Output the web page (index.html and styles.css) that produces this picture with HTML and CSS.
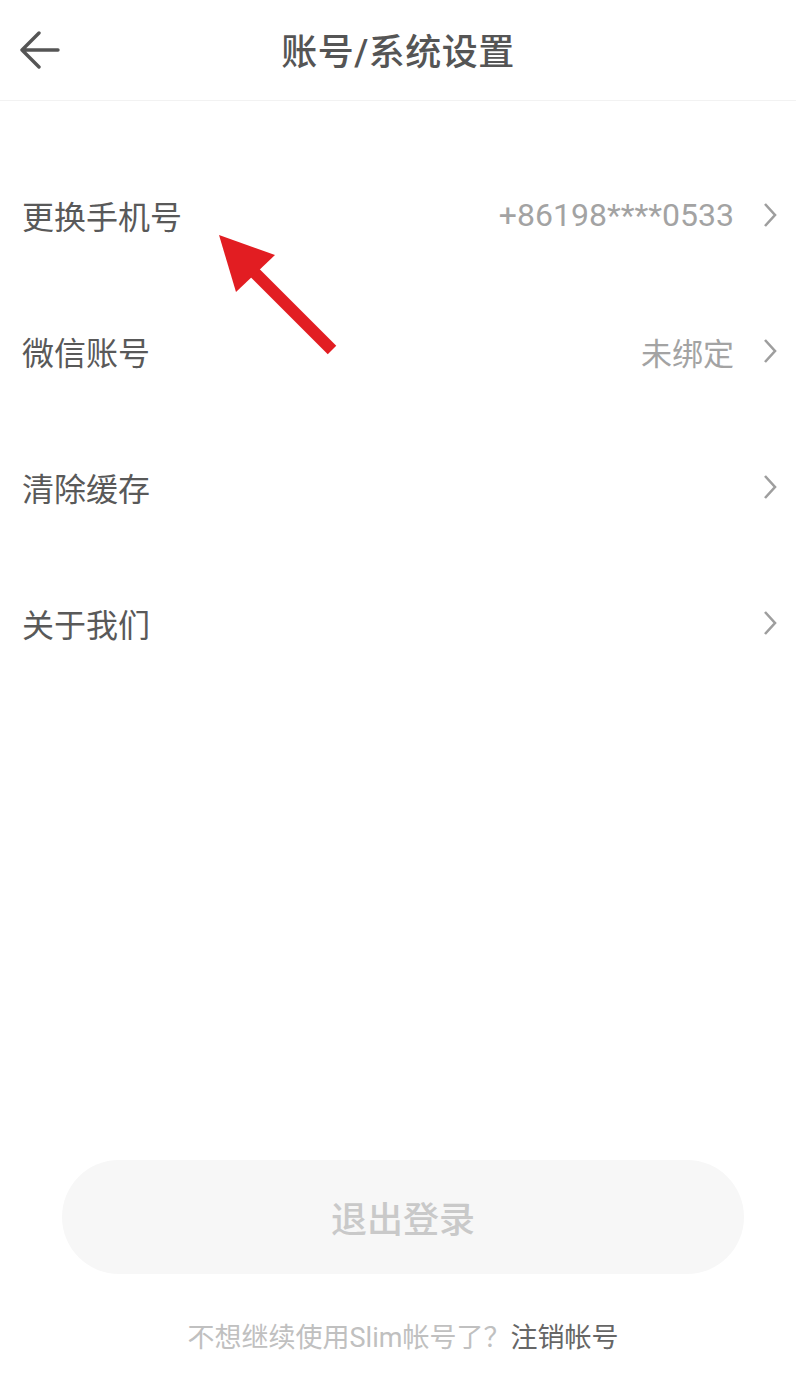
FILE: index.html
```html
<!DOCTYPE html>
<html lang="zh-CN">
<head>
  <meta charset="UTF-8">
  <meta name="viewport" content="width=device-width, initial-scale=1.0">
  <title>账号/系统设置</title>
  <link rel="stylesheet" href="styles.css">
</head>
<body>
  <div class="page">
    <div class="top-bar">
      <svg class="back-icon" width="40" height="40" viewBox="0 0 40 40">
        <path d="M19 3 L2 20 L19 37 M2 20 L38 20" fill="none" stroke="#555" stroke-width="3.4" stroke-linecap="round" stroke-linejoin="round"/>
      </svg>
      <h1>账号/系统设置</h1>
    </div>

    <div class="setting-list">
      <div class="setting-row">
        <span class="row-label">更换手机号</span>
        <span class="row-value num">+86198****0533</span>
        <svg class="chevron" width="14" height="26" viewBox="0 0 14 26"><polyline points="2,2 12,13 2,24" fill="none" stroke="#9e9e9e" stroke-width="2.6"/></svg>
      </div>
      <div class="setting-row">
        <span class="row-label">微信账号</span>
        <span class="row-value">未绑定</span>
        <svg class="chevron" width="14" height="26" viewBox="0 0 14 26"><polyline points="2,2 12,13 2,24" fill="none" stroke="#9e9e9e" stroke-width="2.6"/></svg>
      </div>
      <div class="setting-row">
        <span class="row-label">清除缓存</span>
        <svg class="chevron" width="14" height="26" viewBox="0 0 14 26"><polyline points="2,2 12,13 2,24" fill="none" stroke="#9e9e9e" stroke-width="2.6"/></svg>
      </div>
      <div class="setting-row">
        <span class="row-label">关于我们</span>
        <svg class="chevron" width="14" height="26" viewBox="0 0 14 26"><polyline points="2,2 12,13 2,24" fill="none" stroke="#9e9e9e" stroke-width="2.6"/></svg>
      </div>
    </div>

    <div class="bottom-area">
      <div class="logout-btn">退出登录</div>
      <p class="cancel-tip">不想继续使用Slim帐号了？<span class="cancel-link">注销帐号</span></p>
    </div>

    <svg class="mark-arrow" width="796" height="400" viewBox="0 0 796 400">
      <line x1="250" y1="268" x2="332" y2="350" stroke="#e21d22" stroke-width="12"/>
      <polygon points="219,235 275,255 236,292" fill="#e21d22"/>
    </svg>
  </div>
</body>
</html>
```

FILE: styles.css
```css
html, body {
  margin: 0;
  padding: 0;
  background: #fff;
  font-family: Roboto, "Noto Sans CJK SC", sans-serif;
}
.page {
  position: relative;
  width: 796px;
  height: 1390px;
  display: flex;
  flex-direction: column;
  overflow: hidden;
}
.top-bar {
  height: 100px;
  border-bottom: 1px solid #f2f2f2;
  display: flex;
  align-items: center;
  justify-content: center;
  position: relative;
}
.back-icon {
  position: absolute;
  left: 20px;
  top: 30px;
}
.top-bar h1 {
  margin: 0 0 2px 0;
  font-size: 36px;
  font-weight: 500;
  letter-spacing: 0.5px;
  color: #555;
}
.setting-list {
  margin-top: 46px;
}
.setting-row {
  height: 136px;
  display: flex;
  align-items: center;
  padding: 0 19px 0 22px;
}
.row-label {
  flex: 1;
  font-size: 32px;
  color: #595959;
}
.row-value {
  font-size: 31px;
  color: #a3a3a3;
  margin-right: 29px;
}
.row-value.num {
  font-size: 32px;
}
.chevron {
  display: block;
}
.bottom-area {
  margin-top: auto;
  padding: 0 52px 32px 62px;
  display: flex;
  flex-direction: column;
  align-items: center;
}
.logout-btn {
  width: 100%;
  height: 114px;
  border-radius: 57px;
  background: #f7f7f7;
  color: #c9c9c9;
  font-size: 36px;
  font-weight: 500;
  display: flex;
  align-items: center;
  justify-content: center;
}
.cancel-tip {
  margin: 44px 0 0 0;
  line-height: 40px;
  font-size: 27px;
  color: #c0c0c0;
}
.cancel-link {
  color: #666;
}
.mark-arrow {
  position: absolute;
  left: 0;
  top: 0;
}
```
